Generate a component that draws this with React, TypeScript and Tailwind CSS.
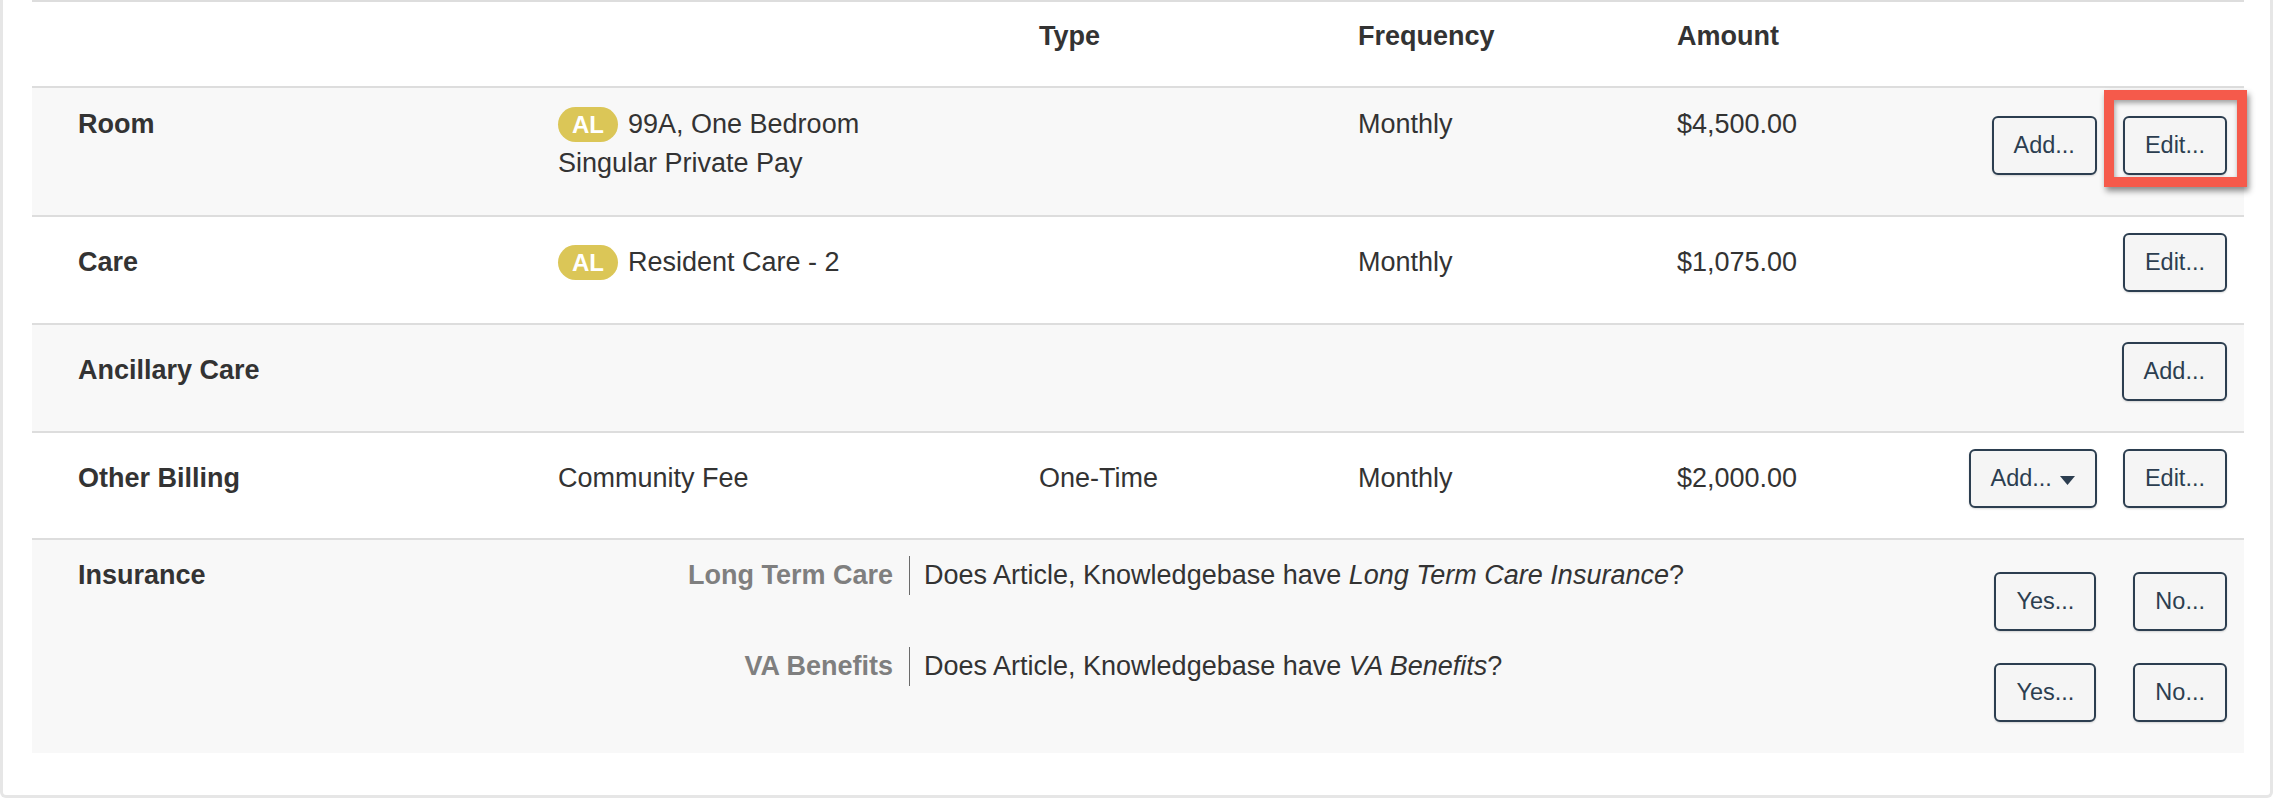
import React from "react";

const FONT = "font-['Liberation_Sans',Arial,Helvetica,sans-serif]";

function Btn({ children, caret }: { children: React.ReactNode; caret?: boolean }) {
  return (
    <button
      type="button"
      className="h-[59px] px-[20px] rounded-[6px] border-2 border-[#2c3e50] bg-[#f5f5f5] text-[#2c3e50] text-[23.5px] leading-none flex items-center gap-[8px] shadow-[0_1px_2px_rgba(0,0,0,0.15)] whitespace-nowrap"
    >
      <span>{children}</span>
      {caret && (
        <svg width="15" height="9" viewBox="0 0 15 9" className="mt-[4px]">
          <path d="M0 0h15L7.5 9z" fill="#2c3e50" />
        </svg>
      )}
    </button>
  );
}

function Badge() {
  return (
    <span className="inline-flex align-middle relative -top-[1px] items-center justify-center h-[35px] w-[60px] rounded-full bg-[#dbc657] text-white font-bold text-[24px] leading-none mr-[10px]">
      AL
    </span>
  );
}

const rowGrid = "grid grid-cols-[526px_481px_319px_319px_1fr] border-t-2 border-[#dddddd]";

export default function App() {
  return (
    <div className={`${FONT} bg-white w-[2276px] h-[802px] text-[#333333] text-[27px] leading-[39px]`}>
      <div className="w-[2273px] border-x-[3px] border-b-[3px] border-[#e6e6e6] rounded-b-[6px] pl-[29px] pr-[26px] pb-[42px]">
        {/* Header */}
        <div className={`${rowGrid} h-[86px] font-bold`}>
          <div className="pt-[15px]" />
          <div className="pt-[15px]" />
          <div className="pt-[15px]">Type</div>
          <div className="pt-[15px]">Frequency</div>
          <div className="pt-[15px]">Amount</div>
        </div>

        {/* Room */}
        <div className={`${rowGrid} h-[129px] bg-[#f8f8f8]`}>
          <div className="pt-[17px] pl-[46px] font-bold">Room</div>
          <div className="pt-[17px]">
            <div>
              <Badge />
              99A, One Bedroom
            </div>
            <div>Singular Private Pay</div>
          </div>
          <div className="pt-[17px]" />
          <div className="pt-[17px]">Monthly</div>
          <div className="flex">
            <div className="pt-[17px] flex-1">$4,500.00</div>
            <div className="pt-[28px] pr-[17px] flex gap-[26px] items-start">
              <Btn>Add...</Btn>
              <div className="relative">
                <div className="absolute left-[-19px] right-[-20px] top-[-26px] bottom-[-12px] border-[10px] border-[#f55a4b] shadow-[2px_4px_6px_rgba(0,0,0,0.45),inset_1px_3px_5px_rgba(0,0,0,0.35)] pointer-events-none" />
                <Btn>Edit...</Btn>
              </div>
            </div>
          </div>
        </div>

        {/* Care */}
        <div className={`${rowGrid} h-[108px]`}>
          <div className="pt-[26px] pl-[46px] font-bold">Care</div>
          <div className="pt-[26px]">
            <Badge />
            Resident Care - 2
          </div>
          <div className="pt-[26px]" />
          <div className="pt-[26px]">Monthly</div>
          <div className="flex">
            <div className="pt-[26px] flex-1">$1,075.00</div>
            <div className="pt-[16px] pr-[17px] flex gap-[26px] items-start">
              <Btn>Edit...</Btn>
            </div>
          </div>
        </div>

        {/* Ancillary Care */}
        <div className={`${rowGrid} h-[108px] bg-[#f8f8f8]`}>
          <div className="pt-[26px] pl-[46px] font-bold">Ancillary Care</div>
          <div />
          <div />
          <div />
          <div className="flex justify-end">
            <div className="pt-[17px] pr-[17px] flex gap-[26px] items-start">
              <Btn>Add...</Btn>
            </div>
          </div>
        </div>

        {/* Other Billing */}
        <div className={`${rowGrid} h-[107px]`}>
          <div className="pt-[26px] pl-[46px] font-bold">Other Billing</div>
          <div className="pt-[26px]">Community Fee</div>
          <div className="pt-[26px]">One-Time</div>
          <div className="pt-[26px]">Monthly</div>
          <div className="flex">
            <div className="pt-[26px] flex-1">$2,000.00</div>
            <div className="pt-[16px] pr-[17px] flex gap-[26px] items-start">
              <Btn caret>Add...</Btn>
              <Btn>Edit...</Btn>
            </div>
          </div>
        </div>

        {/* Insurance */}
        <div className="grid grid-cols-[526px_1fr] border-t-2 border-[#dddddd] h-[215px] bg-[#f8f8f8]">
          <div className="pt-[16px] pl-[46px] font-bold">Insurance</div>
          <div className="pt-[16px] flex flex-col">
            {[
              { label: "Long Term Care", q: "Long Term Care Insurance" },
              { label: "VA Benefits", q: "VA Benefits" },
            ].map((r) => (
              <div key={r.label} className="flex h-[91px]">
                <div className="w-[351px] pr-[16px] text-right font-bold text-[#7f7f7f] h-[39px]">{r.label}</div>
                <div className="border-l border-[#6b6b6b] pl-[14px] h-[39px]">
                  Does Article, Knowledgebase have <i>{r.q}</i>?
                </div>
                <div className="flex-1" />
                <div className="pt-[16px] pr-[17px] flex gap-[37px] items-start">
                  <Btn>Yes...</Btn>
                  <Btn>No...</Btn>
                </div>
              </div>
            ))}
          </div>
        </div>
      </div>
    </div>
  );
}
